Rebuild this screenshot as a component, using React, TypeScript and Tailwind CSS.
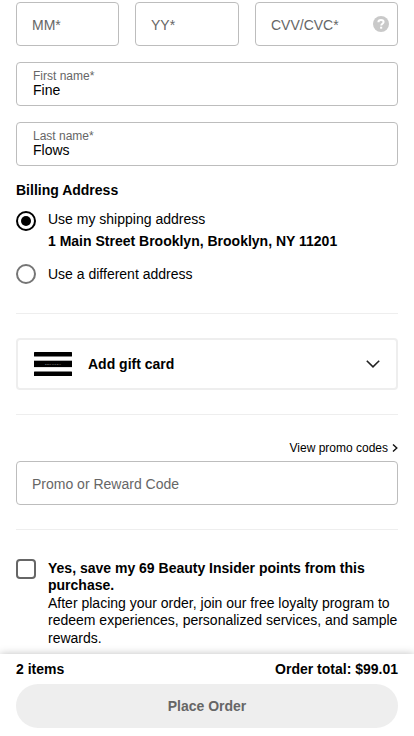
import { clsx } from 'clsx';
import type { ReactNode } from 'react';

function FieldBox({ className, children }: { className?: string; children: ReactNode }) {
  return (
    <div
      className={clsx(
        'flex h-11 items-center rounded-[4px] border border-[#bdbdbd] px-[15px] text-sm text-[#666]',
        className,
      )}
    >
      {children}
    </div>
  );
}

function FilledField({ label, value }: { label: string; value: string }) {
  return (
    <div className="flex h-11 flex-col rounded-[4px] border border-[#bdbdbd] px-4 pt-[6px]">
      <span className="text-xs leading-[14px] text-[#666]">{label}</span>
      <span className="text-sm leading-[15px]">{value}</span>
    </div>
  );
}

function Radio({ checked }: { checked?: boolean }) {
  return (
    <span
      className={clsx(
        'flex size-5 shrink-0 items-center justify-center rounded-full border-2',
        checked ? 'border-black' : 'border-[#757575]',
      )}
    >
      {checked && <span className="size-[10px] rounded-full bg-black" />}
    </span>
  );
}

function HelpIcon() {
  return (
    <svg className="-mr-[7px] ml-auto size-4" viewBox="0 0 16 16" fill="none">
      <circle cx="8" cy="8" r="8" fill="#c9c9c9" />
      <path
        d="M5.4 6.2C5.4 4.7 6.5 3.9 8 3.9s2.6.8 2.6 2.1c0 1.7-2.4 1.7-2.4 3.5"
        stroke="#fff"
        strokeWidth="2"
      />
      <rect x="7.1" y="10.7" width="2.1" height="2" fill="#fff" />
    </svg>
  );
}

// Striped gift card with the tiny wordmark in the middle band
function GiftCardIcon() {
  return (
    <svg className="h-6 w-[38px]" viewBox="0 0 38 24">
      <rect width="38" height="4.4" rx="0.5" />
      <rect y="8.7" width="38" height="6.4" />
      <rect y="19.6" width="38" height="4.4" rx="0.5" />
      <text
        x="19"
        y="12.8"
        fill="#999"
        fontSize="2.4"
        textAnchor="middle"
        textLength="16"
        className="font-bold"
      >
        SEPHORA
      </text>
    </svg>
  );
}

export default function App() {
  return (
    <div className="flex h-screen flex-col bg-white font-['Liberation_Sans',Arial,sans-serif] text-sm text-black">
      <main className="min-h-0 flex-1 overflow-hidden px-4 pt-[2px]">
        <div className="flex gap-4">
          <FieldBox className="w-[103px]">
            <span className="pt-[2px]">MM*</span>
          </FieldBox>
          <FieldBox className="w-[104px]">
            <span className="pt-[2px]">YY*</span>
          </FieldBox>
          <FieldBox className="flex-1">
            <span className="pt-[2px]">CVV/CVC*</span>
            <HelpIcon />
          </FieldBox>
        </div>

        <div className="mt-4 flex flex-col gap-4">
          <FilledField label="First name*" value="Fine" />
          <FilledField label="Last name*" value="Flows" />
        </div>

        <h2 className="mt-4 text-sm leading-4 font-bold">Billing Address</h2>
        <div className="mt-[13px] flex gap-3">
          <Radio checked />
          <div className="-mt-[3px] flex flex-col leading-[22px]">
            <span>Use my shipping address</span>
            <span className="font-bold">1 Main Street Brooklyn, Brooklyn, NY 11201</span>
          </div>
        </div>
        <div className="mt-3 flex items-center gap-3">
          <Radio />
          <span className="leading-5">Use a different address</span>
        </div>

        <hr className="mt-[29px] border-[#eee]" />

        <button className="mt-6 flex h-[52px] w-full items-center rounded-[4px] border-2 border-[#eee] px-4">
          <GiftCardIcon />
          <span className="ml-4 font-bold">Add gift card</span>
          <svg
            className="ml-auto h-2 w-[14px]"
            viewBox="0 0 14 8"
            fill="none"
            stroke="#222"
            strokeWidth="1.6"
          >
            <path d="m.8.8 6.2 6 6.2-6" />
          </svg>
        </button>

        <hr className="mt-6 border-[#eee]" />

        <div className="mt-[25px] flex h-4 items-center justify-end text-xs">
          <span>View promo codes</span>
          <svg
            className="ml-1 h-2 w-[6px]"
            viewBox="0 0 6 8"
            fill="none"
            stroke="#111"
            strokeWidth="1.4"
          >
            <path d="m1 .5 3.8 3.5L1 7.5" />
          </svg>
        </div>
        <FieldBox className="mt-[5px]">
          <span className="pt-[2px]">Promo or Reward Code</span>
        </FieldBox>

        <hr className="mt-6 border-[#eee]" />

        <div className="mt-[29px] flex gap-3">
          <span className="size-5 shrink-0 rounded-[4px] border-2 border-[#666]" />
          <div className="pt-[0.5px] leading-[17.5px]">
            <p className="font-bold whitespace-nowrap">
              Yes, save my 69 Beauty Insider points from this
              <br />
              purchase.
            </p>
            <p className="whitespace-nowrap">
              After placing your order, join our free loyalty program to
              <br />
              redeem experiences, personalized services, and sample
              <br />
              rewards.
            </p>
          </div>
        </div>
      </main>

      <footer className="relative h-[82px] shrink-0 bg-white px-4 pt-[7px] shadow-[0_0_8px_rgba(0,0,0,0.25)]">
        <div className="flex justify-between leading-4 font-bold">
          <span>2 items</span>
          <span>Order total: $99.01</span>
        </div>
        <button className="mt-[7px] h-11 w-full rounded-full bg-[#eee] font-bold text-[#666]">
          Place Order
        </button>
      </footer>
    </div>
  );
}
